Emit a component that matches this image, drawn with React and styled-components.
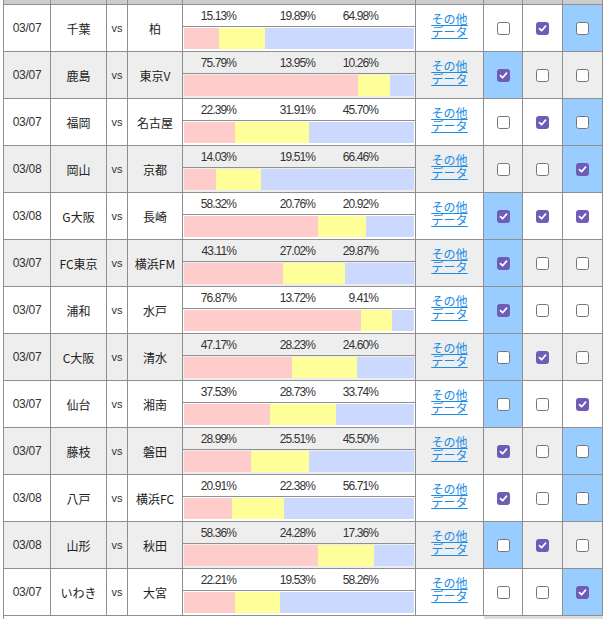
import React from "react";
import styled, { createGlobalStyle } from "styled-components";

const Global = createGlobalStyle`
  html, body { margin: 0; padding: 0; background: #fff; }
  body { font-family: "Noto Sans CJK JP", "Liberation Sans", sans-serif; color: #222; }
`;

const LINE = "#8f8f8f";
const COLS = "47px 56px 21px 55px 233px 68px 39px 40px 40px";

const Table = styled.div`
  margin-left: 3px;
  width: 600px;
  border-left: 1px solid ${LINE};
  display: grid;
  grid-template-columns: ${COLS};
`;

const HeadCell = styled.div`
  height: 4px;
  background: #cccccc;
  border-right: 1px solid ${LINE};
  border-bottom: 1px solid ${LINE};
`;

const Cell = styled.div`
  height: 46px;
  border-right: 1px solid ${LINE};
  border-bottom: 1px solid ${LINE};
  background: ${(p) => (p.$hl ? "#99ccff" : p.$alt ? "#eeeeee" : "#ffffff")};
  display: flex;
  align-items: center;
  justify-content: center;
`;

const DateText = styled.span`
  font-family: "Liberation Sans", sans-serif;
  font-size: 12px;
  letter-spacing: -0.3px;
  color: #333;
`;

const Team = styled.span`
  font-family: "Noto Sans CJK JP", sans-serif;
  font-size: 12px;
  color: #222;
  white-space: nowrap;
`;

const Vs = styled.span`
  font-family: "Liberation Sans", sans-serif;
  font-size: 11px;
  color: #333;
`;

const BarCell = styled.div`
  height: 46px;
  border-right: 1px solid ${LINE};
  border-bottom: 1px solid ${LINE};
  background: ${(p) => (p.$alt ? "#eeeeee" : "#ffffff")};
  display: flex;
  flex-direction: column;
`;

const PercentRow = styled.div`
  height: 21px;
  border-bottom: 1px solid ${LINE};
  display: grid;
  grid-template-columns: 53px 79px 63px;
  align-items: center;
`;

const Pct = styled.span`
  text-align: right;
  font-family: "Liberation Sans", sans-serif;
  font-size: 12px;
  letter-spacing: -0.9px;
  color: #333;
`;

const BarWrap = styled.div`
  flex: 1;
  padding: 1px 1px 2px 1px;
  display: flex;
`;

const Seg = styled.div`
  height: 100%;
  background: ${(p) => p.$c};
`;

const Link = styled.a`
  display: flex;
  flex-direction: column;
  align-items: center;
  font-family: "Noto Sans CJK JP", sans-serif;
  font-size: 12px;
  line-height: 13px;
  color: #1a8ce6;
  text-decoration: underline;
  margin-top: -6px;
  cursor: pointer;
`;

const LinkLine = styled.span`
  display: block;
  height: 13px;
  text-decoration: underline;
`;

const Box = styled.span`
  width: 11px;
  height: 11px;
  border: 1px solid ${(p) => (p.$on ? "#6e5cb6" : "#767676")};
  border-radius: 2.5px;
  background: ${(p) => (p.$on ? "#6e5cb6" : "#fff")};
  display: flex;
  align-items: center;
  justify-content: center;
`;

const FootGap = styled.div`
  grid-column: 1 / 7;
  height: 4px;
`;

const FootBox = styled.div`
  grid-column: 7 / 10;
  height: 4px;
  background: #dddddd;
`;

const rows = [
  ["03/07", "千葉", "柏", "15.13", "19.89", "64.98", [0, 1, 0]],
  ["03/07", "鹿島", "東京V", "75.79", "13.95", "10.26", [1, 0, 0]],
  ["03/07", "福岡", "名古屋", "22.39", "31.91", "45.70", [0, 1, 0]],
  ["03/08", "岡山", "京都", "14.03", "19.51", "66.46", [0, 0, 1]],
  ["03/08", "G大阪", "長崎", "58.32", "20.76", "20.92", [1, 1, 1]],
  ["03/07", "FC東京", "横浜FM", "43.11", "27.02", "29.87", [1, 0, 0]],
  ["03/07", "浦和", "水戸", "76.87", "13.72", "9.41", [1, 0, 0]],
  ["03/07", "C大阪", "清水", "47.17", "28.23", "24.60", [0, 1, 0]],
  ["03/07", "仙台", "湘南", "37.53", "28.73", "33.74", [0, 0, 1]],
  ["03/07", "藤枝", "磐田", "28.99", "25.51", "45.50", [1, 0, 0]],
  ["03/08", "八戸", "横浜FC", "20.91", "22.38", "56.71", [1, 0, 0]],
  ["03/08", "山形", "秋田", "58.36", "24.28", "17.36", [0, 1, 0]],
  ["03/07", "いわき", "大宮", "22.21", "19.53", "58.26", [0, 0, 1]],
];

const Check = ({ on }) => (
  <Box $on={on}>
    {on ? (
      <svg width="9" height="9" viewBox="0 0 10 10">
        <path d="M1.6 5.2 L4 7.5 L8.4 2.4" fill="none" stroke="#fff" strokeWidth="1.9" strokeLinecap="round" strokeLinejoin="round" />
      </svg>
    ) : null}
  </Box>
);

export default function App() {
  return (
    <>
      <Global />
      <Table>
        {Array.from({ length: 9 }).map((_, i) => (
          <HeadCell key={"h" + i} />
        ))}
        {rows.map((r, i) => {
          const alt = i % 2 === 1;
          const p = [r[3], r[4], r[5]].map(Number);
          const max = Math.max(...p);
          const hl = p.indexOf(max);
          return (
            <React.Fragment key={i}>
              <Cell $alt={alt}><DateText>{r[0]}</DateText></Cell>
              <Cell $alt={alt}><Team>{r[1]}</Team></Cell>
              <Cell $alt={alt}><Vs>vs</Vs></Cell>
              <Cell $alt={alt}><Team>{r[2]}</Team></Cell>
              <BarCell $alt={alt}>
                <PercentRow>
                  <Pct>{r[3]}%</Pct>
                  <Pct>{r[4]}%</Pct>
                  <Pct>{r[5]}%</Pct>
                </PercentRow>
                <BarWrap>
                  <Seg $c="#ffcccc" style={{ width: p[0] + "%" }} />
                  <Seg $c="#ffff99" style={{ width: p[1] + "%" }} />
                  <Seg $c="#ccd9ff" style={{ width: p[2] + "%" }} />
                </BarWrap>
              </BarCell>
              <Cell $alt={alt}>
                <Link>
                  <LinkLine>その他</LinkLine>
                  <LinkLine>データ</LinkLine>
                </Link>
              </Cell>
              {r[6].map((c, j) => (
                <Cell key={j} $alt={alt} $hl={hl === j}>
                  <Check on={!!c} />
                </Cell>
              ))}
            </React.Fragment>
          );
        })}
        <FootGap />
        <FootBox />
      </Table>
    </>
  );
}
